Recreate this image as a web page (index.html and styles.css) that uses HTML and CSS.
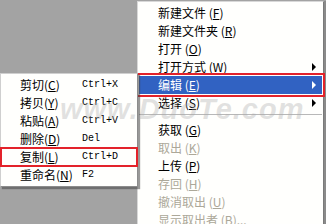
FILE: index.html
```html
<!DOCTYPE html>
<html>
<head>
<meta charset="utf-8">
<link rel="stylesheet" href="styles.css">
</head>
<body>
<div class="desk">
  <div class="menu main">
    <div class="item">新建文件 (<u>F</u>)</div>
    <div class="item">新建文件夹 (<u>R</u>)</div>
    <div class="item">打开 (<u>O</u>)</div>
    <div class="item sub">打开方式 (<u>W</u>)<span class="arrow"></span></div>
    <div class="item sub hl">编辑 (<u>E</u>)<span class="arrow"></span></div>
    <div class="item sub">选择 (<u>S</u>)<span class="arrow"></span></div>
    <div class="sep"></div>
    <div class="item">获取 (<u>G</u>)</div>
    <div class="item dis">取出 (<u>K</u>)</div>
    <div class="item">上传 (<u>P</u>)</div>
    <div class="item dis">存回 (<u>H</u>)</div>
    <div class="item dis">撤消取出 (<u>U</u>)</div>
    <div class="item dis">显示取出者 (<u>B</u>)...</div>
  </div>
  <div class="menu edit">
    <div class="item"><span class="lbl">剪切(<u>C</u>)</span><span class="sc">Ctrl+X</span></div>
    <div class="item"><span class="lbl">拷贝(<u>Y</u>)</span><span class="sc">Ctrl+C</span></div>
    <div class="item"><span class="lbl">粘贴(<u>A</u>)</span><span class="sc">Ctrl+V</span></div>
    <div class="item"><span class="lbl">删除(<u>D</u>)</span><span class="sc">Del</span></div>
    <div class="item mark"><span class="lbl">复制(<u>L</u>)</span><span class="sc">Ctrl+D</span></div>
    <div class="item"><span class="lbl">重命名(<u>N</u>)</span><span class="sc">F2</span></div>
  </div>
  <div class="wm">www.DuoTe.com</div>
</div>
</body>
</html>
```
FILE: styles.css
```css
html, body {
  margin: 0;
  padding: 0;
  background: #a3a3a3;
}
.desk {
  position: relative;
  width: 326px;
  height: 224px;
  overflow: hidden;
  background: #a3a3a3;
  font-family: "Noto Sans CJK SC", sans-serif;
  font-size: 12px;
  color: #000;
}
.menu {
  position: absolute;
  background: #fffffd;
  box-sizing: border-box;
}
.main {
  left: 137px;
  top: 1px;
  width: 187px;
  height: 240px;
  padding-top: 2px;
  border-top: 1px solid #d8d8d8;
  border-left: 1px solid #d8d8d8;
  border-right: 1px solid #7a7a7a;
  box-shadow: 2px 0 0 #8a8a8a;
}
.item {
  position: relative;
  height: 18px;
  line-height: 18px;
  white-space: nowrap;
  display: flex;
  align-items: center;
}
.main .item {
  padding-left: 19px;
  margin: 0 1px;
}
.item u {
  text-decoration: underline;
  text-underline-offset: 1px;
}
.dis {
  color: #aca899;
}
.hl {
  background: #3162c2;
  color: #fff;
  outline: 2px solid #e3222a;
  outline-offset: 1px;
}
.arrow {
  position: absolute;
  right: 6px;
  top: 5px;
  width: 0;
  height: 0;
  border-top: 4px solid transparent;
  border-bottom: 4px solid transparent;
  border-left: 4px solid #000;
}
.hl .arrow {
  border-left-color: #fff;
}
.sep {
  height: 1px;
  background: #b8b8b8;
  margin: 2px 1px 6px 1px;
}
.edit {
  left: 0;
  top: 73px;
  width: 138px;
  height: 114px;
  padding-top: 2px;
  border: 1px solid #cfcfcf;
  border-right-color: #8c8c8c;
  border-bottom-color: #8c8c8c;
  box-shadow: 2px 2px 1px rgba(70, 70, 70, 0.55);
}
.edit .item {
  padding-left: 19px;
}
.lbl {
  width: 62px;
}
.sc {
  font-family: "Liberation Mono", monospace;
  font-size: 10px;
}
.mark {
  outline: 2px solid #e3222a;
  outline-offset: -1px;
}
.wm {
  position: absolute;
  left: 60px;
  top: 93px;
  font-family: "Liberation Sans", sans-serif;
  font-weight: bold;
  font-style: italic;
  font-size: 29px;
  letter-spacing: 1px;
  color: rgba(170, 170, 170, 0.35);
  pointer-events: none;
}
```
